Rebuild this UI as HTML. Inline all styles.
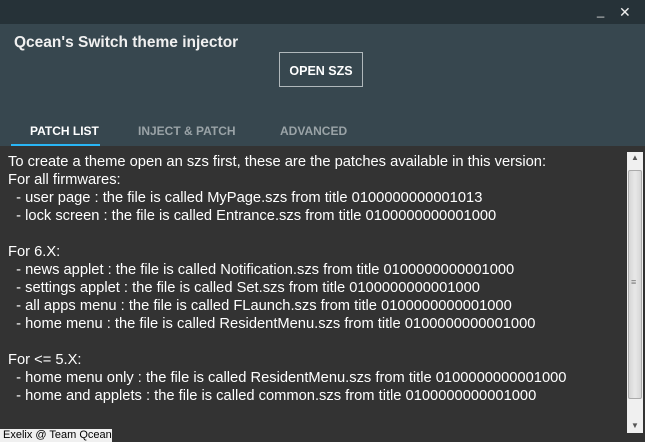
<!DOCTYPE html>
<html><head><style>
body{margin:0;width:645px;height:442px;overflow:hidden;background:#333;font-family:"Liberation Sans",sans-serif;position:relative}
.tb{position:absolute;left:0;top:0;width:645px;height:24px;background:#263238}
.hd{position:absolute;left:0;top:24px;width:645px;height:122px;background:#37474f}
.t{position:absolute;color:#fff;font-size:14px}
.title{left:14px;top:34px;font-size:15.5px;font-weight:bold;color:#f0f0f0}
.btn{position:absolute;left:279px;top:52px;width:84px;height:35px;box-sizing:border-box;border:1px solid #b0b8bb;color:#fff;font-size:12.5px;font-weight:bold;line-height:36px;text-align:center}
.tab{position:absolute;top:124px;font-size:12px;font-weight:bold;color:#9aa3a7}
.ul{position:absolute;left:11px;top:144px;width:89px;height:2px;background:#29b6f6}
.txt{position:absolute;left:8px;top:153px;color:#fff;font-size:14.7px;line-height:18px;white-space:pre}
.sb{position:absolute;left:627px;top:152px;width:16px;height:281px;background:#f0f0f0}
.th{position:absolute;left:628px;top:170px;width:14px;height:229px;background:linear-gradient(90deg,#d6d6d6,#e8e8e8,#d6d6d6);border:1px solid #aaa;box-sizing:border-box;border-radius:2px}
.lbl{position:absolute;left:0;top:429px;width:112px;height:13px;background:#f0f0f0;color:#000;font-size:11px;line-height:13px;padding-left:3px;box-sizing:border-box}
</style></head><body>
<div class="tb"></div>
<div class="t" style="left:597px;top:3px;font-size:13px;color:#ddd">_</div>
<div class="t" style="left:619px;top:4px;font-size:14px;color:#eee">✕</div>
<div class="hd"></div>
<div class="t title">Qcean's Switch theme injector</div>
<div class="btn">OPEN SZS</div>
<div class="tab" style="left:30px;color:#fff">PATCH LIST</div>
<div class="tab" style="left:138px">INJECT &amp; PATCH</div>
<div class="tab" style="left:280px">ADVANCED</div>
<div class="ul"></div>
<div class="txt">To create a theme open an szs first, these are the patches available in this version:
For all firmwares:
  - user page : the file is called MyPage.szs from title 0100000000001013
  - lock screen : the file is called Entrance.szs from title 0100000000001000

For 6.X:
  - news applet : the file is called Notification.szs from title 0100000000001000
  - settings applet : the file is called Set.szs from title 0100000000001000
  - all apps menu : the file is called FLaunch.szs from title 0100000000001000
  - home menu : the file is called ResidentMenu.szs from title 0100000000001000

For &lt;= 5.X:
  - home menu only : the file is called ResidentMenu.szs from title 0100000000001000
  - home and applets : the file is called common.szs from title 0100000000001000</div>
<div class="sb"></div>
<div class="th"></div>
<div class="t" style="left:631px;top:153px;font-size:8px;color:#555">▲</div>
<div class="t" style="left:631px;top:421px;font-size:8px;color:#555">▼</div>
<div class="t" style="left:631px;top:277px;font-size:9px;color:#777">≡</div>
<div class="lbl">Exelix @ Team Qcean</div>
</body></html>
